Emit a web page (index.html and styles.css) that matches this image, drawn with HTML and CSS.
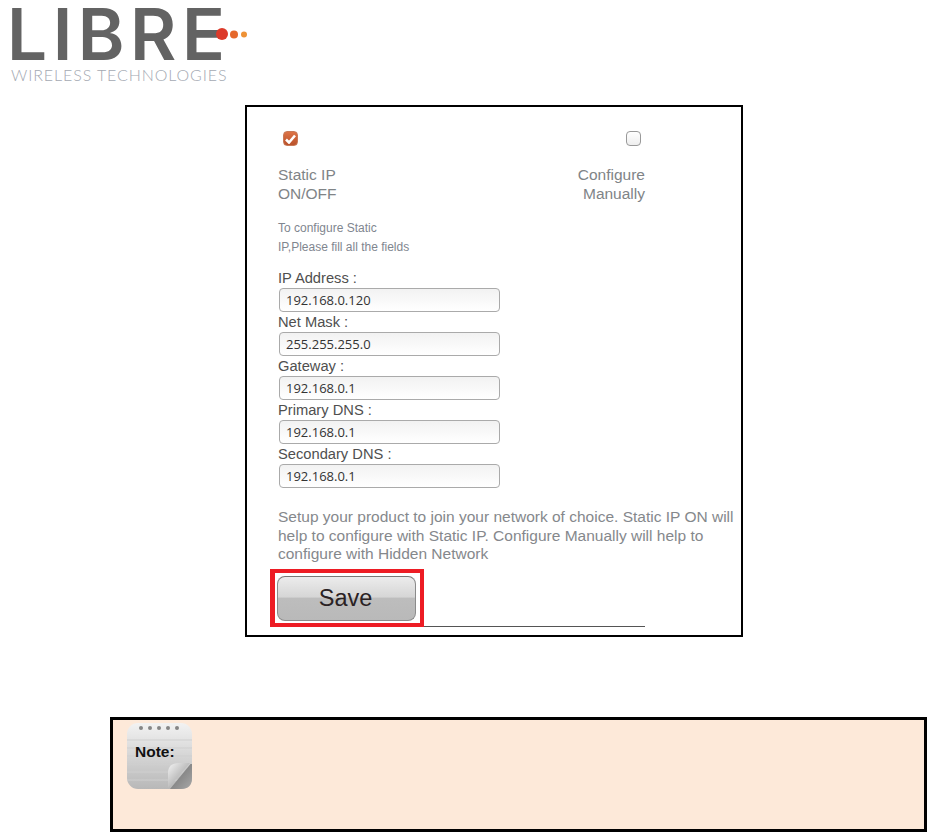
FILE: index.html
```html
<!DOCTYPE html>
<html lang="en">
<head>
  <meta charset="UTF-8" />
  <title>Static IP Settings</title>
  <link rel="stylesheet" href="styles.css">
</head>
<body>
  <header class="logo">
    <div class="logo-name">LIBRE</div>
    <div class="logo-sub">WIRELESS TECHNOLOGIES</div>
    <svg class="logo-dots" width="36" height="14" viewBox="0 0 36 14">
      <circle cx="7" cy="7" r="6" fill="#dc3a2a"/>
      <circle cx="19" cy="7.5" r="4" fill="#e5682c"/>
      <circle cx="29" cy="7.5" r="3" fill="#ee9236"/>
    </svg>
  </header>

  <main class="card">
    <div class="options">
      <div class="option">
        <span class="check check-on">
          <svg width="11" height="10" viewBox="0 0 11 10"><path d="M1 5.5 L4 8.5 L10 1.5" fill="none" stroke="#fff" stroke-width="2.6"/></svg>
        </span>
        <p class="option-label">Static IP<br>ON/OFF</p>
      </div>
      <div class="option option-right">
        <span class="check"></span>
        <p class="option-label">Configure<br>Manually</p>
      </div>
    </div>

    <p class="hint">To configure Static<br>IP,Please fill all the fields</p>

    <form class="fields">
      <label for="ip">IP Address :</label>
      <input id="ip" type="text" value="192.168.0.120">
      <label for="mask">Net Mask :</label>
      <input id="mask" type="text" value="255.255.255.0">
      <label for="gateway">Gateway :</label>
      <input id="gateway" type="text" value="192.168.0.1">
      <label for="dns1">Primary DNS :</label>
      <input id="dns1" type="text" value="192.168.0.1">
      <label for="dns2">Secondary DNS :</label>
      <input id="dns2" type="text" value="192.168.0.1">
    </form>

    <p class="help">Setup your product to join your network of choice. Static IP ON will help to configure with Static IP. Configure Manually will help to configure with Hidden Network</p>

    <div class="save-row">
      <div class="save-mark">
        <button class="save" type="button">Save</button>
      </div>
    </div>
  </main>

  <aside class="note">
    <svg class="note-icon" width="66" height="66" viewBox="0 0 66 66">
      <defs>
        <linearGradient id="pad" x1="0" y1="0" x2="0" y2="1">
          <stop offset="0" stop-color="#f2f2f2"/>
          <stop offset="1" stop-color="#b8b8b8"/>
        </linearGradient>
        <linearGradient id="curl" x1="0" y1="0" x2="1" y2="1">
          <stop offset="0" stop-color="#f4f4f4"/>
          <stop offset="0.6" stop-color="#b4b4b4"/>
          <stop offset="1" stop-color="#7a7a7a"/>
        </linearGradient>
        <linearGradient id="fold" x1="0" y1="0" x2="1" y2="1">
          <stop offset="0" stop-color="#6a6a6a"/>
          <stop offset="1" stop-color="#a8a8a8"/>
        </linearGradient>
      </defs>
      <rect width="65" height="66" rx="11" fill="url(#pad)"/>
      <g fill="#858585">
        <circle cx="14" cy="5" r="2"/>
        <circle cx="23" cy="5" r="2"/>
        <circle cx="32" cy="5" r="2"/>
        <circle cx="41" cy="5" r="2"/>
        <circle cx="50" cy="5" r="2"/>
      </g>
      <path d="M0 17H65M0 25H65M0 33H65M0 41H65M0 49H65M0 57H65" stroke="#cfcfcf" stroke-width="1"/>
      <text class="note-word" x="8" y="34">Note:</text>
      <path d="M41 65 V50 Q41 40 52 40 H63 Z" fill="url(#curl)"/>
      <path d="M63.5 41 L43 66 H54 Q65 66 65 55 V41 Z" fill="url(#fold)"/>
    </svg>
  </aside>
</body>
</html>
```

FILE: styles.css
```css
body {
  margin: 0;
  font-family: "Liberation Sans", Arial, sans-serif;
  background-color: #fff;
}

.logo {
  position: relative;
  box-sizing: border-box;
  height: 105px;
  padding: 8px 0 0 7px;
}

.logo-name {
  height: 52px;
  font-family: "Inter", "Liberation Sans", sans-serif;
  font-size: 71px;
  font-weight: 600;
  line-height: 52px;
  letter-spacing: 5.5px;
  color: #636363;
}

.logo-sub {
  margin: 7px 0 0 4px;
  font-family: "Lato", "Liberation Sans", sans-serif;
  font-size: 16px;
  font-weight: 300;
  line-height: 16px;
  letter-spacing: 0.9px;
  white-space: nowrap;
  color: #a4a9b2;
}

.logo-dots {
  position: absolute;
  left: 215px;
  top: 27px;
}

.card {
  box-sizing: border-box;
  width: 498px;
  height: 532px;
  margin-left: 245px;
  padding: 24px 0 0 31px;
  border: 2px solid #000;
  background: #fff;
}

.options {
  display: flex;
  width: 367px;
  justify-content: space-between;
}

.option-right {
  display: flex;
  flex-direction: column;
  align-items: center;
}

.option-right .check {
  margin-left: 44px;
}

.option-right .option-label {
  text-align: right;
}

.check {
  box-sizing: border-box;
  display: flex;
  align-items: center;
  justify-content: center;
  width: 15px;
  height: 15px;
  margin: 0 0 0 5px;
  border: 1px solid #999;
  border-radius: 4px;
  background: linear-gradient(#fff, #eee);
}

.check-on {
  border-color: #c87a58;
  background: linear-gradient(#dd7346, #b9512a);
}

.option-label {
  margin: 19px 0 0;
  font-size: 15.5px;
  line-height: 19px;
  color: #808487;
}

.hint {
  margin: 16px 0 0;
  font-size: 12px;
  line-height: 18.5px;
  color: #7f868f;
}

.fields {
  display: flex;
  flex-direction: column;
  align-items: flex-start;
  margin-top: 12px;
}

.fields label {
  height: 20px;
  font-size: 14.7px;
  line-height: 20px;
  color: #4f4f4f;
}

.fields input {
  box-sizing: border-box;
  width: 221px;
  height: 24px;
  margin-left: 1px;
  padding: 0 6px;
  border: 1px solid #aaa;
  border-radius: 4px;
  background: linear-gradient(#f2f2f2, #fff);
  font-family: "Open Sans", "Noto Sans", sans-serif;
  font-size: 13px;
  color: #333;
}

.help {
  width: 462px;
  margin: 20px 0 0;
  font-size: 15.5px;
  line-height: 18.5px;
  color: #85888c;
}

.save-row {
  width: 367px;
  height: 57px;
  margin-top: 5px;
  border-bottom: 1px solid #555;
}

.save-mark {
  box-sizing: border-box;
  width: 154px;
  height: 58px;
  margin-left: -8px;
  padding: 3px 2px;
  border: 4px solid #ed1c24;
  border-left-width: 5px;
}

.save {
  display: block;
  width: 139px;
  height: 45px;
  padding: 0 2px 0 0;
  border: 1px solid #8b8b8b;
  border-top-color: #777;
  border-radius: 8px;
  background: linear-gradient(#ececec 0%, #d6d6d6 46%, #bdbdbd 50%, #b9b9b9 100%);
  font-family: "Liberation Sans", Arial, sans-serif;
  font-size: 23.5px;
  color: #2a2224;
}

.note {
  box-sizing: border-box;
  width: 817px;
  height: 115px;
  margin: 80px 0 0 110px;
  padding: 3px 0 0 14px;
  border: 3px solid #000;
  background-color: #fde9d9;
}

.note-icon {
  display: block;
}

.note-word {
  font-family: "Liberation Sans", Arial, sans-serif;
  font-size: 15.5px;
  font-weight: bold;
  fill: #111;
}
```
